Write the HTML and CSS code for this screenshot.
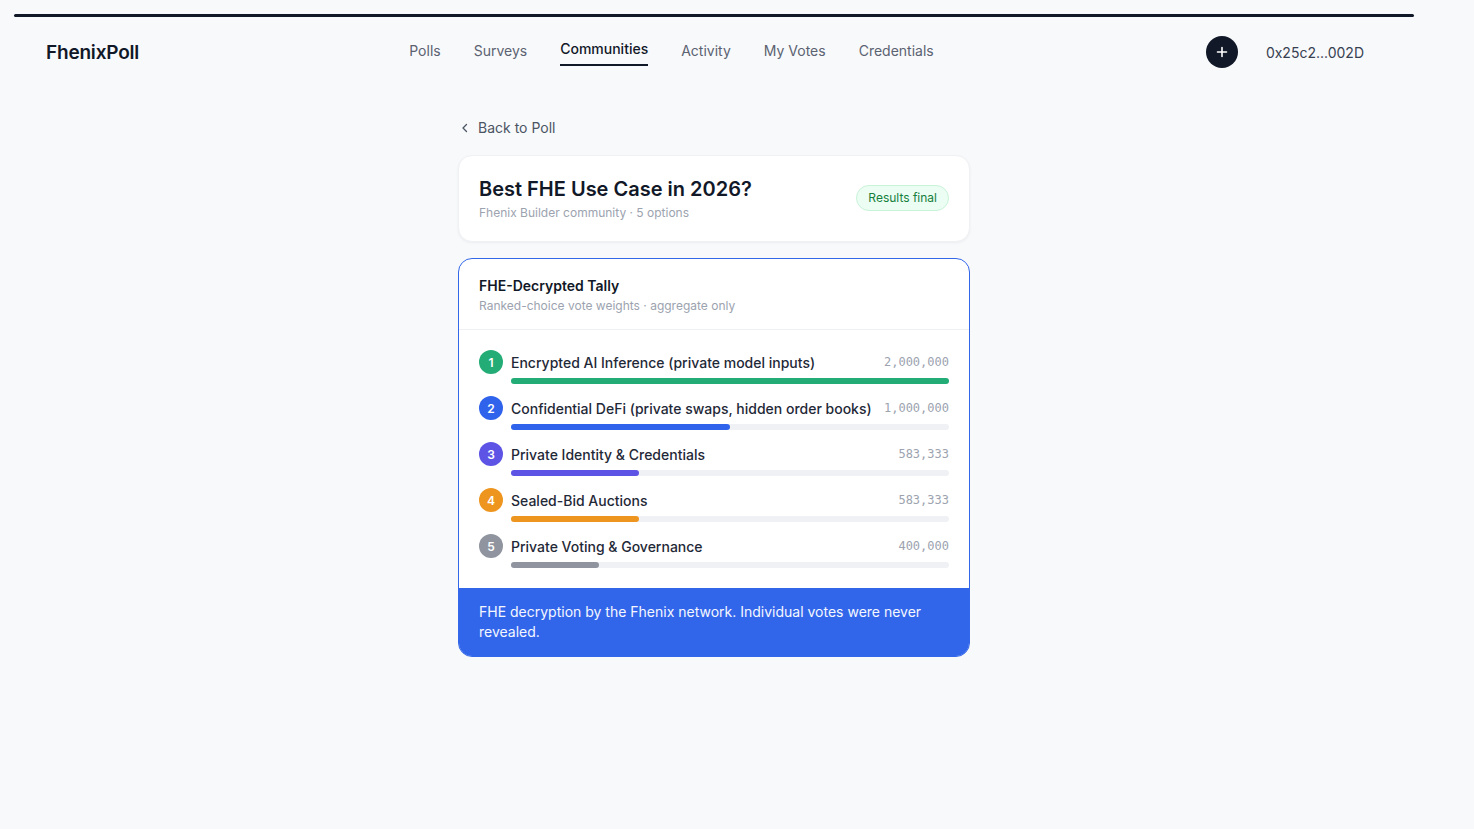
FILE: index.html
```html
<!DOCTYPE html>
<html>
  <head>
    <title>FhenixPoll</title>
    <meta charset="utf-8">
    <link rel="stylesheet" href="styles.css">
  </head>
  <body>
    <div class="topline"></div>

    <header class="header">
      <div class="logo">FhenixPoll</div>
      <nav class="nav">
        <a href="#">Polls</a>
        <a href="#">Surveys</a>
        <a href="#" class="active">Communities</a>
        <a href="#">Activity</a>
        <a href="#">My Votes</a>
        <a href="#">Credentials</a>
      </nav>
      <div class="account">
        <button class="plus">
          <svg width="12" height="12" viewBox="0 0 12 12"><path d="M6 1.5v9M1.5 6h9" stroke="#fff" stroke-width="1.6" stroke-linecap="round"/></svg>
        </button>
        <span class="address">0x25c2...002D</span>
      </div>
    </header>

    <div class="shell">
      <main class="main">
        <a href="#" class="back">
          <svg width="10" height="10" viewBox="0 0 10 10"><path d="M6.5 1.5L3 5l3.5 3.5" fill="none" stroke="#4b5563" stroke-width="1.3" stroke-linecap="round" stroke-linejoin="round"/></svg>
          Back to Poll
        </a>

        <section class="card poll">
          <div>
            <h1>Best FHE Use Case in 2026?</h1>
            <div class="meta">Fhenix Builder community · 5 options</div>
          </div>
          <span class="badge">Results final</span>
        </section>

        <section class="card tally">
          <div class="tally-head">
            <h2>FHE-Decrypted Tally</h2>
            <div class="meta">Ranked-choice vote weights · aggregate only</div>
          </div>

          <div class="rows">
            <div class="row">
              <div class="line">
                <span class="num green">1</span>
                <span class="label">Encrypted AI Inference (private model inputs)</span>
                <span class="votes">2,000,000</span>
              </div>
              <div class="track"><div class="fill green" style="width: 100%"></div></div>
            </div>
            <div class="row">
              <div class="line">
                <span class="num blue">2</span>
                <span class="label">Confidential DeFi (private swaps, hidden order books)</span>
                <span class="votes">1,000,000</span>
              </div>
              <div class="track"><div class="fill blue" style="width: 50%"></div></div>
            </div>
            <div class="row">
              <div class="line">
                <span class="num purple">3</span>
                <span class="label">Private Identity &amp; Credentials</span>
                <span class="votes">583,333</span>
              </div>
              <div class="track"><div class="fill purple" style="width: 29.17%"></div></div>
            </div>
            <div class="row">
              <div class="line">
                <span class="num orange">4</span>
                <span class="label">Sealed-Bid Auctions</span>
                <span class="votes">583,333</span>
              </div>
              <div class="track"><div class="fill orange" style="width: 29.17%"></div></div>
            </div>
            <div class="row">
              <div class="line">
                <span class="num gray">5</span>
                <span class="label">Private Voting &amp; Governance</span>
                <span class="votes">400,000</span>
              </div>
              <div class="track"><div class="fill gray" style="width: 20%"></div></div>
            </div>
          </div>

          <div class="note">FHE decryption by the Fhenix network. Individual votes were never revealed.</div>
        </section>
      </main>
    </div>
  </body>
</html>
```

FILE: styles.css
```css
*{
  box-sizing: border-box;
}
body{
  margin: 0;
  background-color: #f8f9fb;
  font-family: Inter, "Noto Sans", sans-serif;
  color: #111827;
}
a{
  text-decoration: none;
}
.topline{
  height: 3px;
  margin: 14px 60px 0 14px;
  background-color: #111827;
  border-radius: 2px;
}
.header{
  display: flex;
  align-items: center;
  justify-content: space-between;
  height: 64px;
  margin-top: 3px;
  padding: 0 110px 0 46px;
}
.logo{
  font-size: 19px;
  font-weight: 600;
  letter-spacing: -0.2px;
  color: #111827;
}
.nav{
  display: flex;
  gap: 33px;
  margin-left: -2px;
}
.nav a{
  font-size: 14px;
  color: #5b6271;
  padding: 4px 0 5px;
  border-bottom: 2px solid transparent;
}
.nav a.active{
  color: #111827;
  font-weight: 500;
  border-bottom-color: #111827;
  padding-top: 2px;
  padding-bottom: 4px;
}
.account{
  display: flex;
  align-items: center;
  gap: 28px;
}
.plus{
  width: 32px;
  height: 32px;
  border: none;
  border-radius: 50%;
  background-color: #111827;
  display: flex;
  align-items: center;
  justify-content: center;
  padding: 0;
}
.address{
  font-size: 14px;
  color: #374151;
}
.shell{
  width: 1428px;
}
.main{
  width: 512px;
  margin: 0 auto;
  padding-top: 35px;
}
.back{
  display: flex;
  align-items: center;
  gap: 8px;
  font-size: 14px;
  line-height: 18px;
  color: #4b5563;
  padding-left: 2px;
  margin-bottom: 18px;
}
.card{
  background-color: #fff;
  border-radius: 14px;
}
.poll{
  display: flex;
  align-items: center;
  justify-content: space-between;
  padding: 20px 20px 20px 20px;
  border: 1px solid #f0f1f4;
  box-shadow: 0 1px 3px rgba(17, 24, 39, 0.05);
}
.poll h1{
  margin: 0;
  font-size: 20px;
  line-height: 27px;
  font-weight: 600;
  color: #111827;
}
.meta{
  margin-top: 2px;
  font-size: 12px;
  line-height: 16px;
  color: #9ca3af;
}
.badge{
  font-size: 12px;
  line-height: 16px;
  color: #15803d;
  background-color: #ecfdf3;
  border: 1px solid #c8f3d8;
  border-radius: 999px;
  padding: 4px 11px;
  margin-bottom: 2px;
}
.tally{
  margin-top: 16px;
  border: 1px solid #3366e8;
  overflow: hidden;
}
.tally-head{
  padding: 17px 20px 15px;
  border-bottom: 1px solid #eef0f3;
}
.tally h2{
  margin: 0;
  font-size: 14px;
  line-height: 20px;
  font-weight: 600;
  color: #111827;
}
.rows{
  display: flex;
  flex-direction: column;
  gap: 12px;
  padding: 20px 20px 20px;
}
.line{
  display: flex;
  align-items: center;
  gap: 8px;
  height: 24px;
}
.num{
  width: 24px;
  height: 24px;
  border-radius: 50%;
  color: #fff;
  font-size: 12px;
  font-weight: 600;
  display: flex;
  align-items: center;
  justify-content: center;
  flex-shrink: 0;
}
.label{
  flex: 1;
  font-size: 14px;
  font-weight: 500;
  color: #1f2937;
  white-space: nowrap;
}
.votes{
  font-family: "DejaVu Sans Mono", "Liberation Mono", monospace;
  font-size: 12px;
  color: #9ca3af;
}
.track{
  margin: 4px 0 0 32px;
  height: 6px;
  border-radius: 3px;
  background-color: #eff1f5;
}
.fill{
  height: 6px;
  border-radius: 3px;
}
.green{ background-color: #24ac76; }
.blue{ background-color: #2f63eb; }
.purple{ background-color: #5d54e6; }
.orange{ background-color: #ee951f; }
.gray{ background-color: #8f949e; }
.note{
  background-color: #3166ea;
  color: #f5f7ff;
  font-size: 14px;
  line-height: 20px;
  padding: 14px 20px;
}
```
